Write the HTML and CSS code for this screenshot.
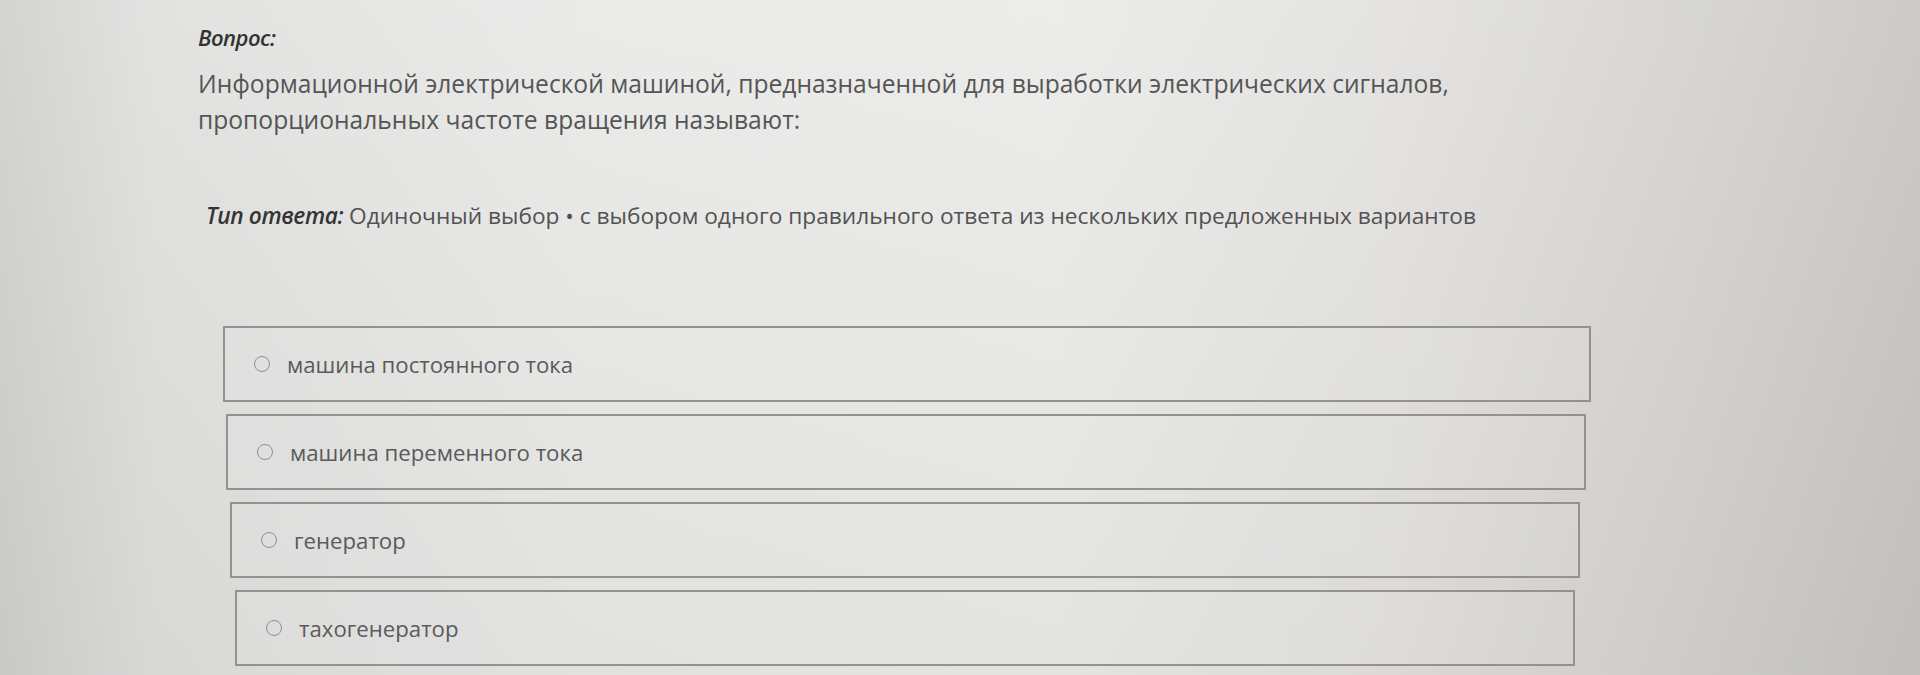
FILE: index.html
```html
<!DOCTYPE html>
<html lang="ru">
<head>
<meta charset="utf-8">
<link rel="stylesheet" href="styles.css">
</head>
<body>
<div class="page">
  <div class="question">
    <div class="label">Вопрос:</div>
    <div class="text">Информационной электрической машиной, предназначенной для выработки электрических сигналов, пропорциональных частоте вращения называют:</div>
  </div>
  <div class="type"><span class="type-label">Тип ответа:</span> Одиночный выбор • с выбором одного правильного ответа из нескольких предложенных вариантов</div>
  <div class="options">
    <div class="option o1"><span class="radio"></span><span class="opt-text">машина постоянного тока</span></div>
    <div class="option o2"><span class="radio"></span><span class="opt-text">машина переменного тока</span></div>
    <div class="option o3"><span class="radio"></span><span class="opt-text">генератор</span></div>
    <div class="option o4"><span class="radio"></span><span class="opt-text">тахогенератор</span></div>
  </div>
</div>
</body>
</html>
```
FILE: styles.css
```css
html, body {
  margin: 0;
  padding: 0;
  width: 1920px;
  height: 675px;
  overflow: hidden;
}
body {
  font-family: "Open Sans", "Noto Sans", sans-serif;
  color: #4b4b4b;
  background:
    linear-gradient(180deg, rgba(255,255,255,0.10) 0%, rgba(0,0,0,0.03) 100%),
    linear-gradient(90deg, #cfcfcd 0%, #dfdfde 8%, #e8e8e7 30%, #eaeae8 55%, #e2e1df 72%, #d3d2cf 88%, #c7c5c2 100%);
}
.page {
  padding: 23px 0 0 198px;
}
.label {
  font-style: italic;
  font-weight: 600;
  font-size: 22px;
  line-height: 28px;
  color: #333;
  letter-spacing: -0.5px;
}
.text {
  font-size: 24.6px;
  line-height: 36px;
  width: 1320px;
  margin-top: 15px;
  color: #555;
}
.type {
  margin: 63px 0 0 8px;
  font-size: 22.7px;
  line-height: 30px;
  color: #525252;
}
.type-label {
  font-style: italic;
  font-weight: 600;
  color: #343434;
  letter-spacing: -0.4px;
}
.options {
  margin-top: 95px;
  display: flex;
  flex-direction: column;
  gap: 12px;
}
.option {
  height: 76px;
  border: 2px solid #939290;
  box-sizing: border-box;
  display: flex;
  align-items: center;
  background: rgba(255,255,255,0.06);
}
.o1 { margin-left: 25px; width: 1368px; }
.o2 { margin-left: 28px; width: 1360px; }
.o3 { margin-left: 32px; width: 1350px; }
.o4 { margin-left: 37px; width: 1340px; }
.radio {
  width: 14px;
  height: 14px;
  border: 1.5px solid #8e8e8e;
  border-radius: 50%;
  margin-left: 29px;
  flex: none;
}
.opt-text {
  margin-left: 17px;
  font-size: 22.2px;
  color: #5a5a5a;
}
```
